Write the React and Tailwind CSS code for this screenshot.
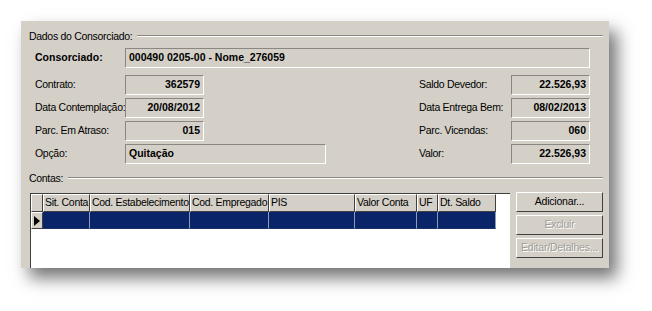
import React from "react";

const font = { fontFamily: '"Liberation Sans", Tahoma, Arial, sans-serif' };

// sunken read-only edit box, classic win look
const Field = ({ value, className = "", align = "right" }) => (
  <div
    className={`h-[20px] flex items-center border border-t-[#8a8782] border-l-[#8a8782] border-b-white border-r-white bg-[#d4d0c8] px-[3px] text-[10.5px] font-bold text-black whitespace-nowrap ${
      align === "right" ? "justify-end" : "justify-start"
    } ${className}`}
  >
    {value}
  </div>
);

const Label = ({ children, className = "" }) => (
  <div className={`h-[20px] flex items-center text-[10.5px] tracking-[-0.3px] text-black whitespace-nowrap ${className}`}>
    {children}
  </div>
);

const GroupTitle = ({ children }) => (
  <div className="flex items-center gap-[5px]">
    <span className="text-[10.5px] tracking-[-0.3px] text-black leading-[12px]">{children}</span>
    <div className="flex-1 flex flex-col">
      <div className="h-px bg-[#8a8782]" />
      <div className="h-px bg-white" />
    </div>
  </div>
);

const columns = [
  { name: "Sit. Conta", w: "w-[47px]" },
  { name: "Cod. Estabelecimento", w: "w-[100px]" },
  { name: "Cod. Empregado", w: "w-[79px]" },
  { name: "PIS", w: "w-[86px]" },
  { name: "Valor Conta", w: "w-[62px]" },
  { name: "UF", w: "w-[21px]" },
  { name: "Dt. Saldo", w: "w-[58px]" },
];

const Button = ({ children, disabled }) => (
  <div
    className={`h-[20px] w-[87px] flex items-center justify-center border border-t-white border-l-white border-b-[#404040] border-r-[#404040] bg-[#d4d0c8] text-[10.5px] tracking-[-0.2px] whitespace-nowrap ${
      disabled ? "text-[#a09d97] [text-shadow:1px_1px_0_#fff]" : "text-black"
    }`}
  >
    {children}
  </div>
);

export default function App() {
  return (
    <div className="w-[652px] h-[311px] bg-white overflow-hidden pt-[21px] pl-[21px]" style={font}>
      <div className="w-[588px] h-[247px] bg-[#d4d0c8] overflow-hidden shadow-[8px_10px_16px_rgba(0,0,0,0.55)] pl-[8px] pr-[6px] pt-[9px]">
        <GroupTitle>Dados do Consorciado:</GroupTitle>

        <div className="pl-[6px] pr-[13px] mt-[6px]">
          <div className="flex items-center">
            <Label className="w-[90px] font-bold tracking-normal">Consorciado:</Label>
            <Field value="000490 0205-00 - Nome_276059" align="left" className="flex-1" />
          </div>

          <div className="flex mt-[7px]">
            <div className="flex flex-col gap-[3px]">
              <div className="flex">
                <Label className="w-[90px]">Contrato:</Label>
                <Field value="362579" className="w-[79px]" />
              </div>
              <div className="flex">
                <Label className="w-[90px]">Data Contemplação:</Label>
                <Field value="20/08/2012" className="w-[79px]" />
              </div>
              <div className="flex">
                <Label className="w-[90px]">Parc. Em Atraso:</Label>
                <Field value="015" className="w-[79px]" />
              </div>
              <div className="flex">
                <Label className="w-[90px]">Opção:</Label>
                <Field value="Quitação" align="left" className="w-[201px]" />
              </div>
            </div>
            <div className="flex-1" />
            <div className="flex flex-col gap-[3px]">
              <div className="flex">
                <Label className="w-[92px]">Saldo Devedor:</Label>
                <Field value="22.526,93" className="w-[79px]" />
              </div>
              <div className="flex">
                <Label className="w-[92px]">Data Entrega Bem:</Label>
                <Field value="08/02/2013" className="w-[79px]" />
              </div>
              <div className="flex">
                <Label className="w-[92px]">Parc. Vicendas:</Label>
                <Field value="060" className="w-[79px]" />
              </div>
              <div className="flex">
                <Label className="w-[92px]">Valor:</Label>
                <Field value="22.526,93" className="w-[79px]" />
              </div>
            </div>
          </div>
        </div>

        <div className="mt-[8px]">
          <GroupTitle>Contas:</GroupTitle>
        </div>

        <div className="flex mt-[9px] pl-[1px]">
          {/* grid */}
          <div className="w-[482px] h-[90px] bg-white border-t border-l border-t-[#404040] border-l-[#404040]">
            <div className="flex h-[18px]">
              <div className="w-[12px] bg-[#d4d0c8] border border-t-white border-l-white border-b-[#404040] border-r-[#404040]" />
              {columns.map((c) => (
                <div
                  key={c.name}
                  className={`${c.w} bg-[#d4d0c8] border border-t-white border-l-white border-b-[#404040] border-r-[#404040] flex items-center pl-[1px] text-[10.5px] tracking-[-0.3px] text-black whitespace-nowrap overflow-hidden`}
                >
                  {c.name}
                </div>
              ))}
            </div>
            <div className="flex h-[17px]">
              <div className="w-[12px] bg-[#d4d0c8] border border-t-white border-l-white border-b-[#404040] border-r-[#404040] flex items-center">
                <svg width="6" height="10" viewBox="0 0 6 10" className="ml-[2px]">
                  <path d="M0 0 L6 5 L0 10 Z" fill="#000" />
                </svg>
              </div>
              {columns.map((c) => (
                <div key={c.name} className={`${c.w} bg-[#0a246a] border-r border-b border-r-[#8d9ab8] border-b-[#1c2f66]`} />
              ))}
            </div>
          </div>

          {/* buttons */}
          <div className="flex flex-col gap-[3px] ml-[6px] -mt-[1px]">
            <Button>Adicionar...</Button>
            <Button disabled>Excluir</Button>
            <Button disabled>Editar/Detalhes...</Button>
          </div>
        </div>
      </div>
    </div>
  );
}
